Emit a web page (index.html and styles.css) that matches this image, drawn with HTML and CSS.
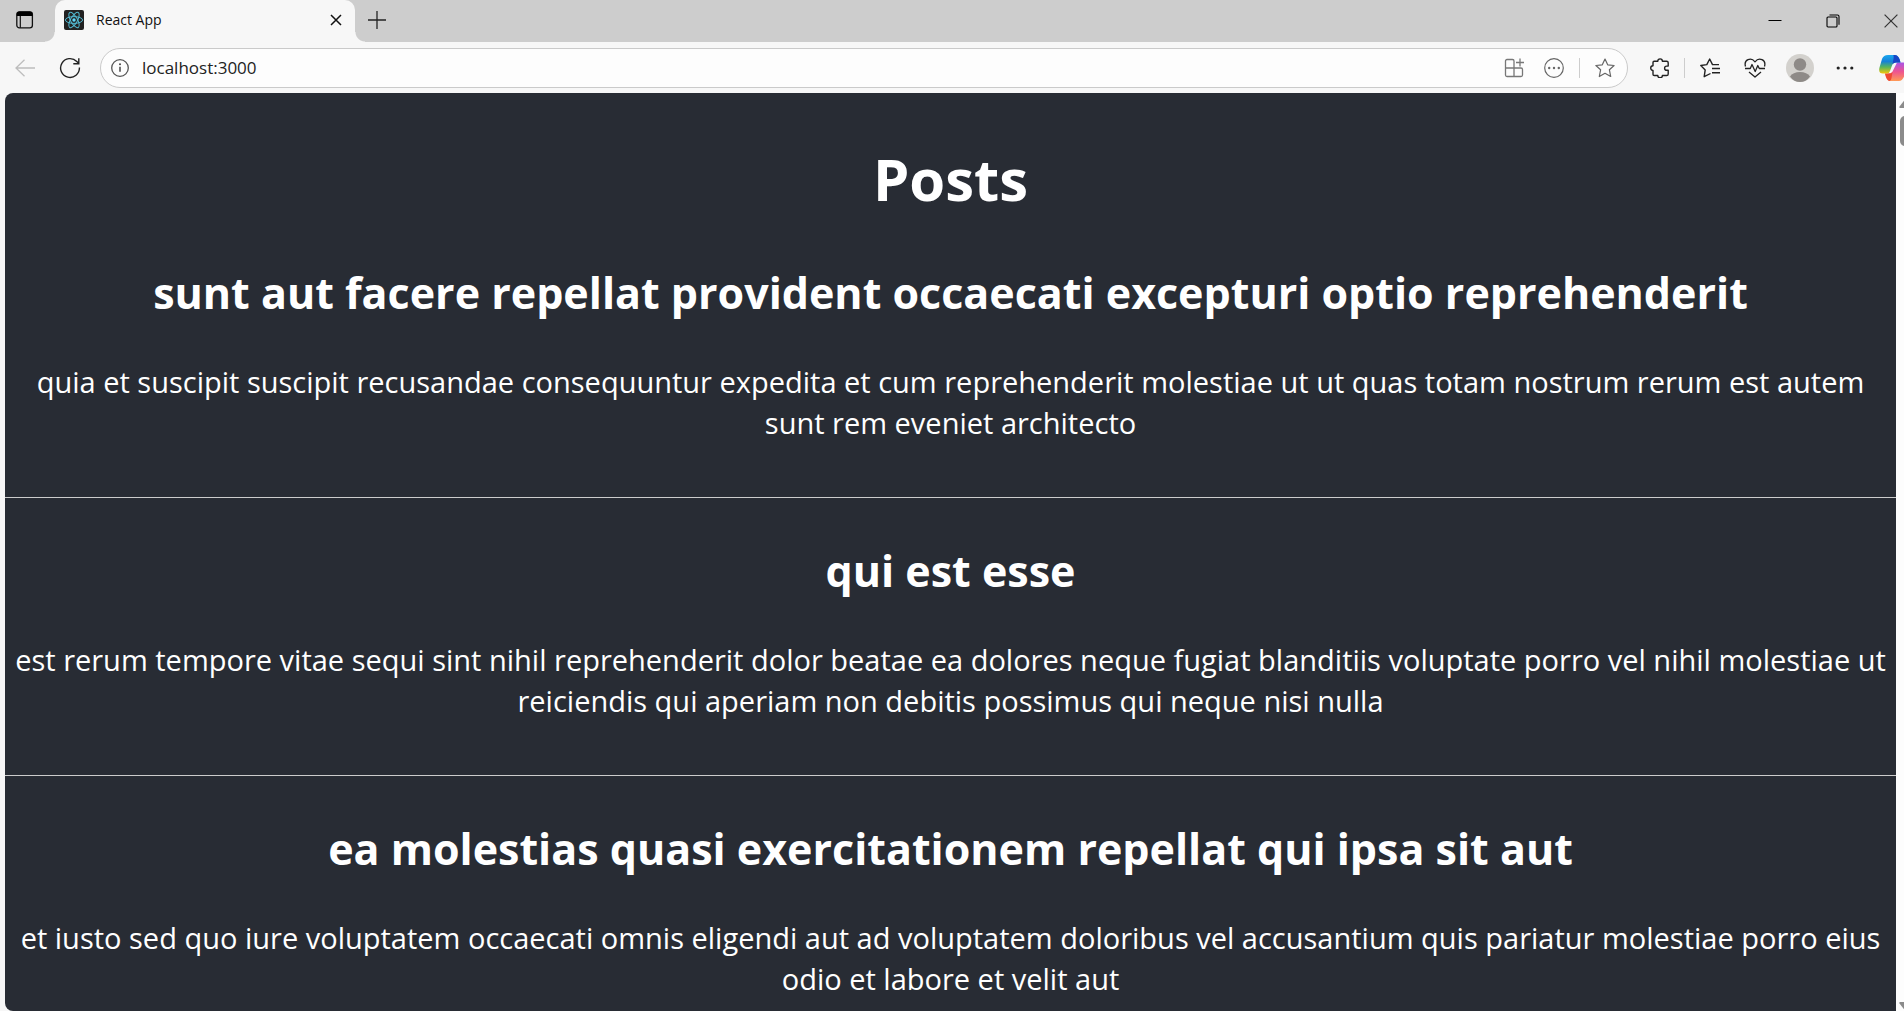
FILE: index.html
```html
<!DOCTYPE html>
<html lang="en">
<head>
<meta charset="utf-8">
<meta name="viewport" content="width=device-width, initial-scale=1">
<title>React App</title>
<link rel="stylesheet" href="styles.css">
</head>
<body class="window">
<header class="tab-strip">
  <button class="icon-button tab-actions" aria-label="Tab actions">
    <svg width="20" height="20" viewBox="0 0 20 20"><rect x="1.8" y="1.8" width="15.6" height="16" rx="2.6" fill="none" stroke="#111" stroke-width="1.3"/><path d="M1.8 6V4.2a2.6 2.6 0 0 1 2.6-2.6h10.4a2.6 2.6 0 0 1 2.6 2.6V6z" fill="#000"/><path d="M5.3 6v11.8" stroke="#111" stroke-width="1.2"/></svg>
  </button>
  <div class="tab">
    <svg width="20" height="20" viewBox="0 0 20 20"><rect width="20" height="20" rx="2" fill="#222"/><g fill="none" stroke="#53b9d1" stroke-width="1"><ellipse cx="10" cy="10" rx="8.6" ry="3.4"/><ellipse cx="10" cy="10" rx="8.6" ry="3.4" transform="rotate(60 10 10)"/><ellipse cx="10" cy="10" rx="8.6" ry="3.4" transform="rotate(120 10 10)"/></g><circle cx="10" cy="10" r="1.7" fill="#61dafb"/></svg>
    <span class="tab-title">React App</span>
    <button class="icon-button tab-close" aria-label="Close tab">
      <svg width="12" height="12" viewBox="0 0 12 12"><path d="M1 1l10 10M11 1L1 11" stroke="#111" stroke-width="1.5"/></svg>
    </button>
  </div>
  <button class="icon-button new-tab" aria-label="New tab">
    <svg width="18" height="18" viewBox="0 0 18 18"><path d="M9 0v18M0 9h18" stroke="#222" stroke-width="1.3"/></svg>
  </button>
  <div class="window-controls">
    <button class="icon-button" aria-label="Minimize"><svg width="14" height="14" viewBox="0 0 14 14"><path d="M.5 6.500h13" stroke="#000"/></svg></button>
    <button class="icon-button" aria-label="Restore"><svg width="14" height="14" viewBox="0 0 14 14"><rect x="1" y="3" width="10" height="10" rx="1" fill="none" stroke="#000" stroke-width="1.1"/><path d="M3.500 1h8a1.500 1.500 0 0 1 1.500 1.500v8.300" fill="none" stroke="#000" stroke-width="1.1"/></svg></button>
    <button class="icon-button" aria-label="Close window"><svg width="14" height="14" viewBox="0 0 14 14"><path d="M.6.6l12.800 12.800M13.400.6L.6 13.400" stroke="#333" stroke-width="1.2"/></svg></button>
  </div>
</header>

<nav class="toolbar" aria-label="Browser toolbar">
  <button class="icon-button nav-button" aria-label="Back" disabled><svg width="20" height="18" viewBox="0 0 20 18"><path d="M9.500.8L1 9l8.500 8.200M1 9h19" fill="none" stroke="#bdbdbd" stroke-width="1.3"/></svg></button>
  <button class="icon-button nav-button" aria-label="Reload"><svg width="22" height="22" viewBox="0 0 22 22"><path d="M20.400 10.500A9.400 9.400 0 1 1 17.800 4.500l1.800 1.800M19.800 1.200v5.500h-5.500" fill="none" stroke="#222" stroke-width="1.4"/></svg></button>
  <div class="address">
    <button class="icon-button info" aria-label="Site information"><svg width="18" height="18" viewBox="0 0 18 18"><circle cx="9" cy="9" r="8.300" fill="none" stroke="#555" stroke-width="1.3"/><path d="M9 7.800v5" stroke="#444" stroke-width="1.500"/><circle cx="9" cy="5.300" r="1" fill="#444"/></svg></button>
    <input class="address-input" type="text" aria-label="Address" value="localhost:3000">
    <button class="icon-button" aria-label="Install app"><svg width="20" height="20" viewBox="0 0 20 20"><g fill="none" stroke="#777" stroke-width="1.3"><path d="M10 10H1.500V3a1.500 1.500 0 0 1 1.500-1.500h5.500A1.500 1.500 0 0 1 10 3zM1.500 10v7A1.500 1.500 0 0 0 3 18.500h14a1.500 1.500 0 0 0 1.500-1.500v-5.500A1.500 1.500 0 0 0 17 10h-7v8.500M12 4.500h8M16 .5v8"/></g></svg></button>
    <button class="icon-button" aria-label="Page options"><svg width="20" height="20" viewBox="0 0 20 20"><circle cx="10" cy="10" r="9.300" fill="none" stroke="#666" stroke-width="1.2"/><g fill="#666"><circle cx="5.200" cy="10" r="1.200"/><circle cx="10" cy="10" r="1.200"/><circle cx="14.800" cy="10" r="1.200"/></g></svg></button>
    <span class="divider"></span>
    <button class="icon-button" aria-label="Add to favorites"><svg width="20" height="20" viewBox="0 0 20 20"><path d="M10 1l2.700 5.800 6.400.7-4.700 4.300 1.300 6.700L10 15.300l-5.700 3.200 1.300-6.700L.9 7.500l6.400-.7z" fill="none" stroke="#666" stroke-width="1.2" stroke-linejoin="round"/></svg></button>
  </div>
  <button class="icon-button extensions" aria-label="Extensions"><svg width="20" height="20" viewBox="0 0 20 20"><path d="M4.200 3.200h3.600a2.300 2.300 0 0 1 4.600 0h4.200q1.600 0 1.600 1.600v3.300h-1.500a2.100 2.100 0 0 0 0 4.200h1.500v3.600q0 1.600-1.600 1.600h-4.200a2.300 2.300 0 0 1-4.600 0H4.200q-1.200 0-1.200-1.300v-3.800a2.300 2.300 0 0 1 0-4.600V4.400q0-1.200 1.200-1.200z" fill="none" stroke="#222" stroke-width="1.4" stroke-linejoin="round"/></svg></button>
  <span class="divider"></span>
  <div class="tools">
    <button class="icon-button" aria-label="Favorites"><svg width="20" height="20" viewBox="0 0 20 20"><path d="M10.500 15.500L4.200 18.700l1-6.800L.8 7.500l6-.9L9.700 1l2.800 5.600H19M12 10.500h8M12 14.800h8" fill="none" stroke="#222" stroke-width="1.400" stroke-linejoin="round"/></svg></button>
    <button class="icon-button" aria-label="Browser essentials"><svg width="22" height="20" viewBox="0 0 22 20"><path d="M1.500 8.500C-.5 1.500 7-1.300 11 3.800 15-1.300 22.500 1.500 20.500 8.500M1 10.500h5.300l1.700-4 3.200 7 2.600-6 1.500 3H21M5 14l6 5 6-5" fill="none" stroke="#222" stroke-width="1.300" stroke-linejoin="round"/></svg></button>
    <button class="icon-button" aria-label="Profile"><svg width="28" height="28" viewBox="0 0 28 28"><circle cx="14" cy="14" r="14" fill="#d3d1cd"/><circle cx="14" cy="10.500" r="6.200" fill="#8e8a87"/><path d="M4 22.500q3-4.500 10-4.500t10 4.500Q20 28 14 28T4 22.500z" fill="#8e8a87"/></svg></button>
    <button class="icon-button" aria-label="Settings and more"><svg width="18" height="18" viewBox="0 0 18 18"><g fill="#222"><circle cx="2.200" cy="9" r="1.600"/><circle cx="9" cy="9" r="1.600"/><circle cx="15.800" cy="9" r="1.600"/></g></svg></button>
    <button class="icon-button copilot" aria-label="Copilot"><svg width="28" height="26" viewBox="0 0 28 26"><defs><linearGradient id="cool" x1="0" y1="0" x2="0" y2="1"><stop offset="0" stop-color="#1aa7ee"/><stop offset=".35" stop-color="#1681d8"/><stop offset=".65" stop-color="#57b55c"/><stop offset="1" stop-color="#f4c60a"/></linearGradient><linearGradient id="warm" x1="0" y1="0" x2="0" y2="1"><stop offset="0" stop-color="#a855e8"/><stop offset=".5" stop-color="#ee5590"/><stop offset="1" stop-color="#ff9a55"/></linearGradient></defs><path d="M18 7.500h6q4.500 0 3.500 5L26 19q-2 7-6 7h-9q-3 0-5-7.500h4q3 0 4-3z" fill="url(#warm)"/><path d="M6 18.500h4q2 0 3.500-1.500l-1 6q-.5 3-2 3Q7.500 26 6 18.500z" fill="#ee4a32"/><path d="M9 0h7q4 0 5.500 7.500H17q-3 0-4 3L11 16q-1 2.500-3 2.500H4q-5 0-3.500-6L3 4q1.500-4 6-4z" fill="url(#cool)"/><path d="M14 0h2q4 0 5.500 7.500H17q-2 0-3.500 1.500l1-5q.5-4-.5-4z" fill="#1846c5"/></svg></button>
  </div>
</nav>

<div class="viewport">
  <main class="app">
    <h1 class="app-title">Posts</h1>
    <article class="post">
      <h2 class="post-title">sunt aut facere repellat provident occaecati excepturi optio reprehenderit</h2>
      <p class="post-body">quia et suscipit suscipit recusandae consequuntur expedita et cum reprehenderit molestiae ut ut quas totam nostrum rerum est autem sunt rem eveniet architecto</p>
    </article>
    <article class="post">
      <h2 class="post-title">qui est esse</h2>
      <p class="post-body">est rerum tempore vitae sequi sint nihil reprehenderit dolor beatae ea dolores neque fugiat blanditiis voluptate porro vel nihil molestiae ut reiciendis qui aperiam non debitis possimus qui neque nisi nulla</p>
    </article>
    <article class="post">
      <h2 class="post-title">ea molestias quasi exercitationem repellat qui ipsa sit aut</h2>
      <p class="post-body">et iusto sed quo iure voluptatem occaecati omnis eligendi aut ad voluptatem doloribus vel accusantium quis pariatur molestiae porro eius odio et labore et velit aut</p>
    </article>
  </main>
  <div class="scrollbar" aria-hidden="true">
    <svg class="arrow" width="12" height="8" viewBox="0 0 12 8"><path d="M1 8q-1-.2-.5-1.500L5 .8q1-1 2 0l4.500 5.700Q12 7.800 11 8z" fill="#8b8b8b"/></svg>
    <span class="thumb"></span>
    <svg class="arrow arrow-down" width="12" height="8" viewBox="0 0 12 8"><path d="M1 0Q0 .2.500 1.500L5 7.200q1 1 2 0l4.500-5.700Q12 .2 11 0z" fill="#8b8b8b"/></svg>
  </div>
</div>
</body>
</html>
```
FILE: styles.css
```css
* { box-sizing: border-box; }

.window {
  margin: 0;
  height: 100vh;
  display: flex;
  flex-direction: column;
  overflow: hidden;
  background: #f7f7f7;
  font-family: "Open Sans", "Noto Sans", sans-serif;
}

.icon-button {
  display: flex;
  align-items: center;
  justify-content: center;
  flex: none;
  width: 40px;
  height: 40px;
  padding: 0;
  border: 0;
  background: transparent;
}

.icon-button svg { flex: none; }

/* Tab strip */
.tab-strip {
  display: flex;
  flex: none;
  height: 42px;
  background: #cdcdcd;
}

.tab-actions { margin: 0 10px 0 5px; }

.tab {
  position: relative;
  display: flex;
  align-items: center;
  width: 300px;
  padding: 0 0 2px 9px;
  border-radius: 10px 10px 0 0;
  background: #f7f7f7;
}

.tab::before,
.tab::after {
  content: "";
  position: absolute;
  bottom: 0;
  width: 10px;
  height: 10px;
}

.tab::before {
  right: 100%;
  background: radial-gradient(circle at 0 0, #cdcdcd 9px, #f7f7f7 10px);
}

.tab::after {
  left: 100%;
  background: radial-gradient(circle at 100% 0, #cdcdcd 9px, #f7f7f7 10px);
}

.tab-title {
  flex: 1;
  margin-left: 12px;
  font-size: 14px;
  line-height: 20px;
  color: #111;
}

.tab-close { width: 39px; }
.new-tab { margin-left: 2px; }

.window-controls {
  display: flex;
  gap: 18px;
  margin: 1px -7px 0 auto;
}

/* Toolbar */
.toolbar {
  display: flex;
  align-items: center;
  flex: none;
  height: 51px;
  padding-left: 5px;
  overflow: hidden;
}

.nav-button { margin-right: 5px; }

.address {
  display: flex;
  align-items: center;
  flex: 1;
  min-width: 0;
  height: 40px;
  margin: 1px 12px 0 5px;
  padding-right: 2px;
  border: 1px solid #cacaca;
  border-radius: 20px;
  background: #fdfdfd;
}

.info { width: 38px; }

.address-input {
  flex: 1;
  min-width: 0;
  height: 30px;
  padding: 0 3px 2px;
  border: 0;
  outline: 0;
  background: transparent;
  font: 17px/24px "Open Sans", "Noto Sans", sans-serif;
  color: #222;
}

.divider {
  flex: none;
  width: 1px;
  height: 20px;
  margin: 0 5px;
  background: #cdcdcd;
}

.extensions { margin-right: -1px; }

.tools {
  display: flex;
  gap: 5px;
  margin-right: -12px;
}

.copilot { width: 46px; }

/* Page area */
.viewport {
  display: flex;
  flex: 1;
  min-height: 0;
  padding-left: 5px;
}

.app {
  flex: 1;
  min-width: 0;
  overflow: hidden;
  padding-top: 46px;
  border-radius: 8px 0 0 8px;
  background: #282c34;
  color: #fff;
  text-align: center;
}

.app-title {
  margin: 0 0 1px;
  font-size: 58px;
  line-height: 80px;
}

.post {
  padding: 42px 0 54px;
  border-bottom: 1px solid #ccc;
}

.post-title {
  margin: 0 0 37px;
  font-size: 43px;
  line-height: 62px;
}

.post-body {
  margin: 0;
  font-size: 29px;
  line-height: 41px;
}

.scrollbar {
  display: flex;
  flex-direction: column;
  flex: none;
  width: 8px;
  padding: 7px 0 1px 3px;
  overflow: hidden;
  background: #fdfdfd;
}

.arrow { flex: none; }
.arrow-down { margin-top: auto; }

.thumb {
  flex: none;
  width: 10px;
  height: 30px;
  margin: 8px 0 0 1px;
  border-radius: 5px;
  background: #8b8b8b;
}
```
